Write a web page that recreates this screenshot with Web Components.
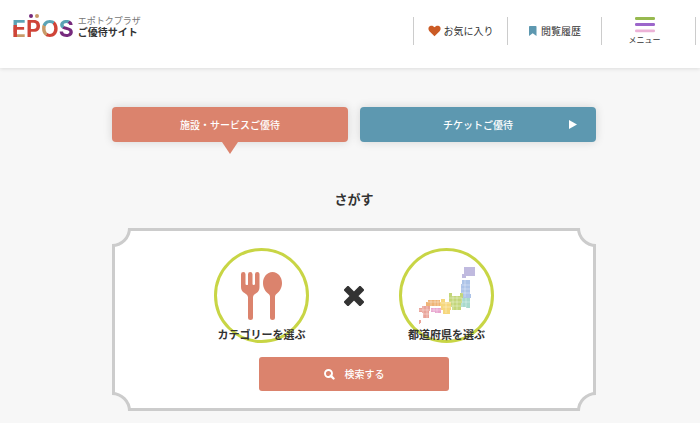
<!DOCTYPE html>
<html lang="ja">
<head>
<meta charset="utf-8">
<meta name="viewport" content="width=device-width, initial-scale=1">
<title>エポトクプラザ ご優待サイト</title>
<style>
body { margin: 0; min-height: 100vh; overflow-x: hidden; background: #f7f7f7; color: #333; font-family: "Noto Sans CJK JP", sans-serif; font-size: 10px; line-height: 16px; }
</style>
</head>
<body>
<epos-page></epos-page>
<script>
const define = (name, html, setup) => customElements.define(name, class extends HTMLElement {
  constructor() {
    super();
    const t = document.createElement('template');
    t.innerHTML = html;
    this.attachShadow({ mode: 'open' }).append(t.content.cloneNode(true));
  }
  connectedCallback() { if (setup) setup(this.shadowRoot); }
});

define('epos-logo', `
<style>
:host { display: block; }
a { display: flex; align-items: center; gap: 4px; color: #333; text-decoration: none; }
.brand { position: relative; font: 700 23px/24px Inter, sans-serif; padding-top: 4px; }
.brand span { -webkit-background-clip: text; background-clip: text; color: transparent; }
.e { background-image: linear-gradient(90deg, #cf4438 38%, transparent 38%), linear-gradient(#5ba3b5 42%, #cf4438 42% 62%, #c99a68 62%); background-size: 100% 50%, 100% 100%; background-position: 0 70%, 0 0; background-repeat: no-repeat; }
.p { background-image: linear-gradient(#cf4438, #cf4438); }
.o { background-image: conic-gradient(from 300deg, #5ba3b5 0 90deg, #cf4438 90deg 270deg, #c99a68 270deg); }
.s { background-image: linear-gradient(135deg, #5ba3b5 38%, #762a7d 38%); }
.dots { position: absolute; left: 17px; top: 1px; width: 10px; height: 4px; }
.name { display: flex; flex-direction: column; font-family: "Liberation Sans", "Noto Sans CJK JP", sans-serif; padding-top: 1px; }
small { font-size: 9px; line-height: 11px; color: #777; font-weight: 400; }
strong { font-size: 10px; line-height: 12px; font-weight: 700; }
</style>
<a href="#"><span class="brand"><span class="e">E</span><span class="p">P</span><span class="o">O</span><span class="s">S</span>
<svg class="dots" viewBox="0 0 10 4"><circle cx="2" cy="2" r="2" fill="#762a7d"/><circle cx="8" cy="2" r="2" fill="#c99a68"/></svg></span>
<span class="name"><small>エポトクプラザ</small><strong>ご優待サイト</strong></span></a>`);

define('nav-item', `
<style>
:host { display: block; flex: 0 0 94px; box-sizing: border-box; height: 28px; border-left: 1px solid #ccc; }
a { display: flex; height: 100%; align-items: center; justify-content: center; gap: 3px; color: #333; text-decoration: none; }
</style><a href="#"><slot name="icon"></slot><slot></slot></a>`);

define('menu-button', `
<style>
:host { display: block; flex: 0 0 95px; box-sizing: border-box; height: 28px; border: solid #ccc; border-width: 0 1px; }
button { display: flex; flex-direction: column; align-items: center; width: 100%; padding: 0 8px 0 0; border: 0; background: none; color: #333; font: 400 8px/14px "Noto Sans CJK JP", sans-serif; }
svg { width: 20px; height: 16px; }
</style>
<button type="button"><svg viewBox="0 0 20 16"><rect width="20" height="3" rx="1.3" fill="#97b94f"/><rect y="6" width="20" height="3" rx="1.3" fill="#9c66cb"/><rect y="12.5" width="20" height="2.7" rx="1.3" fill="#ecb2d7"/></svg>メニュー</button>`);

define('site-header', `
<style>
:host { display: block; background: #fff; box-shadow: 0 1px 4px #0000001c; }
header { display: flex; justify-content: space-between; align-items: flex-start; box-sizing: border-box; height: 68px; padding: 13px 4px 0 12px; }
nav { display: flex; padding-top: 4px; }
svg { display: block; }
</style>
<header><epos-logo></epos-logo><nav>
<nav-item><svg slot="icon" width="13" height="12" viewBox="0 0 13 12"><path d="M6.5 11.2 1.4 6.2C-.2 4.4.3 1.8 2.1 1c1.6-.8 3.3-.2 4.4 1.3C7.600.8 9.400.2 11 1c1.800.8 2.200 3.400.6 5.200z" fill="#cb5b25"/></svg>お気に入り</nav-item>
<nav-item><svg slot="icon" width="10" height="12" viewBox="0 0 10 12"><path d="M1.800 1h5.900q.8 0 .8.800V11L4.700 8.300 1 11V1.800Q1 1 1.800 1z" fill="#5d98b0"/></svg>閲覧履歴</nav-item>
<menu-button></menu-button></nav></header>`);

define('service-tabs', `
<style>
:host { display: grid; grid-template-columns: 1fr 1fr; gap: 12px; }
button { position: relative; height: 35px; padding: 0; border: 0; border-radius: 4px; color: #fff; font: 500 10px/16px "Noto Sans CJK JP", sans-serif; box-shadow: 0 0 10px #00000024; }
.on { background: #db836d; }
.on::after { content: ""; position: absolute; left: calc(50% - 8px); top: 100%; border: solid transparent; border-width: 12px 8px 0; border-top-color: #db836d; }
.off { background: #5d98b0; }
svg { position: absolute; right: 19px; top: 13px; }
</style>
<button type="button" class="on">施設・サービスご優待</button>
<button type="button" class="off">チケットご優待<svg width="8" height="9" viewBox="0 0 8 9"><path d="M0 0 8 4.500 0 9z" fill="#fff"/></svg></button>`);

define('ticket-frame', `
<style>
:host { display: block; position: relative; border: 3px solid #ccc; background: #fff; clip-path: inset(0); padding: 17px 0; }
i { position: absolute; box-sizing: border-box; width: 38px; height: 38px; border: 3px solid #ccc; border-radius: 50%; background: #f7f7f7; }
.t { top: -22px; } .b { bottom: -22px; } .l { left: -22px; } .r { right: -22px; }
</style>
<i class="t l"></i><i class="t r"></i><i class="b l"></i><i class="b r"></i><slot></slot>`);

define('choice-circle', `
<style>
:host { display: block; }
button { display: flex; flex-direction: column; justify-content: flex-end; align-items: center; box-sizing: border-box; width: 95px; height: 95px; padding: 0; border: 3px solid #c8d545; border-radius: 50%; background: none; color: #333; font: 700 11px/12px "Noto Sans CJK JP", sans-serif; white-space: nowrap; }
</style><button type="button"><slot name="icon"></slot><slot></slot></button>`);

define('japan-map', `
<style>:host { display: block; width: 62px; height: 66px; } svg { display: block; }</style>
<svg width="62" height="66" viewBox="0 0 62 66"><g class="fill"></g>
<path d="M50 18v17M46.500 23h9M46.500 27h9M46.500 31h9M47 36v10M51 36v10M47 40h9M34 36h13M34 40h12M38 33v15M42 33v15M36 44h10M26 41h10M28 45h8M31 37v14M12 40h14M16 37v7M20 37v7M23 37v7M19 46v5M22 46v5M16 48h10M4 48h11M8 44v12M12 44v12M8 52h7" stroke="#fff" stroke-opacity=".6" stroke-width=".6" fill="none"/></svg>`,
root => {
  const regions = [
    ['#c0badf', 'M49 5h11v9H51v2H47v-4h2z'],
    ['#adc4e8', 'M47 18h8v14h1v4h-9v-3h-1V22h1z'],
    ['#a9dacd', 'M46 36h9v10h-4v-1h-5z'],
    ['#c3d67a', 'M34 31h3v3h8v-3h3v5h-1v5h-1v7h-9v-3h-3z'],
    ['#f6d77d', 'M26 37h4v3h6v8h-1v4h-7v-4h-2v-4h-1v-4h1z'],
    ['#efb476', 'M13 38h12v6H11v-4h2z'],
    ['#e8a6cf', 'M16 46h10v5h-6v-1h-4z'],
    ['#e9a49a', 'M7 44h8v5h-1v7H8v-5H7v-1H4v-4h3zM4 58h2v3H5v1H4z']
  ];
  root.querySelector('.fill').innerHTML = regions.map(([c, d]) => '<path fill="' + c + '" d="' + d + '"/>').join('');
});

define('search-panel', `
<style>
:host { display: block; }
h2 { margin: 0 0 19px; font-size: 13px; line-height: 20px; text-align: center; }
.choices { display: flex; justify-content: center; align-items: center; gap: 35px; }
svg { display: block; }
.food { margin-bottom: 8px; }
japan-map { margin-right: 2px; }
.submit { display: flex; align-items: center; justify-content: center; gap: 10px; width: 39%; min-width: 190px; height: 34px; margin: 14px auto 0; border: 0; border-radius: 3px; background: #db836d; color: #fff; font: 500 10px/16px "Noto Sans CJK JP", sans-serif; }
</style>
<h2>さがす</h2>
<ticket-frame>
<div class="choices">
<choice-circle><svg slot="icon" class="food" width="42" height="48" viewBox="0 0 42 48"><g fill="#db836d"><path d="M2.300 0Q4.500 0 4.500 2.200V12q0 1 1.300 1T7 12V2.200Q7 0 9.200 0t2.300 2.200V12q0 1 1.200 1t1.300-1V2.200Q14 0 16.300 0t2.200 2.200V15q0 4-3 6-3.500 2-3.500 4v20.500a2.500 2.500 0 0 1-5 0V25q0-2-3.500-4T0 15V2.200Q0 0 2.300 0z"/><path d="M31.500 0C37 0 41 5 41 11c0 5.500-3 9-5 10.500-2 1.300-2 2.500-2 4v20a2.500 2.500 0 0 1-5 0v-20c0-1.500 0-2.700-2-4C25 20 22 16.500 22 11 22 5 26 0 31.500 0z"/></g></svg>カテゴリーを選ぶ</choice-circle>
<svg width="20" height="20" viewBox="0 0 20 20"><path d="M4 4l12 12M16 4 4 16" stroke="#333" stroke-width="6.500" stroke-linecap="square" stroke-linejoin="round"/></svg>
<choice-circle><japan-map slot="icon"></japan-map>都道府県を選ぶ</choice-circle>
</div>
<button type="submit" class="submit"><svg width="11" height="11" viewBox="0 0 11 11"><path d="M6.700 6.700 9.500 9.500" stroke="#fff" stroke-width="2.400" stroke-linecap="round"/><circle cx="4.500" cy="4.500" r="3.500" fill="none" stroke="#fff" stroke-width="1.900"/></svg>検索する</button>
</ticket-frame>`);

define('epos-page', `
<style>
:host { display: block; }
main { display: flex; flex-direction: column; gap: 47px; padding: 39px 104px 12px 112px; }
</style>
<site-header></site-header><main><service-tabs></service-tabs><search-panel></search-panel></main>`);
</script>
</body>
</html>
